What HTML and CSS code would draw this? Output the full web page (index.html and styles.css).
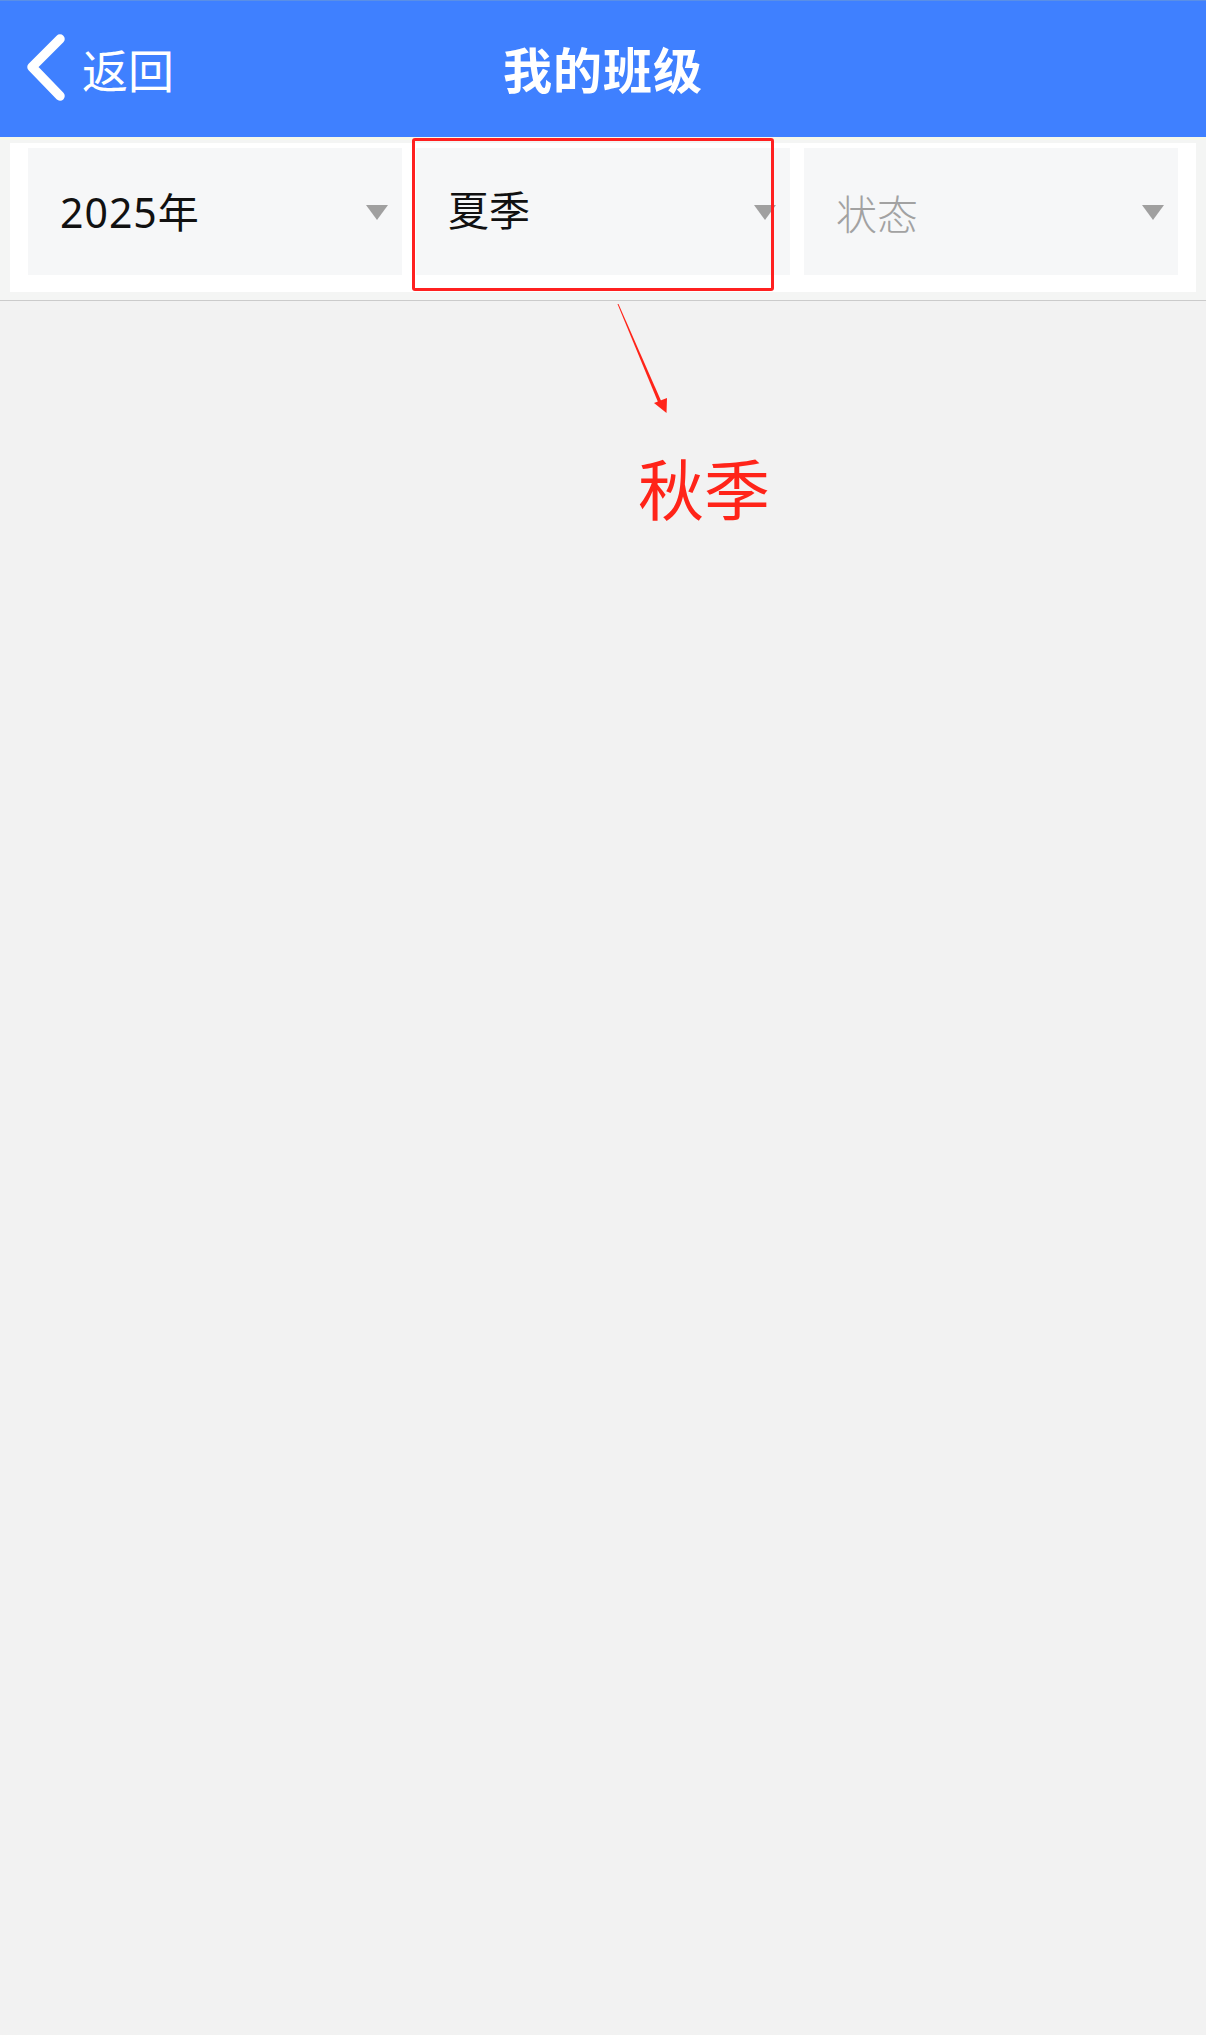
FILE: index.html
```html
<!DOCTYPE html>
<html lang="zh-CN">
<head>
<meta charset="utf-8">
<title>我的班级</title>
<link rel="stylesheet" href="styles.css">
</head>
<body>
<div class="page">
  <header class="navbar">
    <a class="back">
      <svg class="back-icon" width="44" height="70" viewBox="0 0 44 70">
        <polyline points="34,6 6,34 34,63" fill="none" stroke="#fff" stroke-width="9.5" stroke-linecap="round" stroke-linejoin="round"/>
      </svg>
      <span class="back-text">返回</span>
    </a>
    <h1 class="title">我的班级</h1>
  </header>

  <section class="filters">
    <div class="filter-panel">
      <div class="select">
        <span class="select-value year">2025年</span>
        <span class="caret"></span>
      </div>
      <div class="select">
        <span class="select-value">夏季</span>
        <span class="caret"></span>
      </div>
      <div class="select">
        <span class="select-value placeholder">状态</span>
        <span class="caret"></span>
      </div>
    </div>
  </section>

  <main class="content"></main>

  <div class="note-box"></div>
  <svg class="note-arrow" width="80" height="130" viewBox="0 0 80 130">
    <polygon points="8.5,4 9.5,4 53,103 50,104.5" fill="#ff2419"/>
    <polygon points="45,103 58,98 57.5,113" fill="#ff2419"/>
  </svg>
  <div class="note-text">秋季</div>
</div>
</body>
</html>
```

FILE: styles.css
```css
html, body {
  margin: 0;
  padding: 0;
}

body {
  background: #f2f2f2;
  font-family: "Liberation Sans", "Noto Sans CJK SC", sans-serif;
}

.page {
  position: relative;
  width: 1206px;
  min-height: 2035px;
  background: #f2f2f2;
}

/* top navigation bar */
.navbar {
  position: relative;
  height: 136px;
  background: #3f80ff;
  border-top: 1px solid #5a8fe6;
  display: flex;
  align-items: center;
  justify-content: center;
}

.back {
  position: absolute;
  left: 26px;
  top: 0;
  height: 136px;
  display: flex;
  align-items: center;
  gap: 12px;
  color: #fff;
}

.back-icon {
  display: block;
  margin-top: -2px;
}

.back-text {
  font-family: "Noto Sans CJK SC", sans-serif;
  font-size: 46px;
  font-weight: 400;
  line-height: 1;
  margin-top: -2px;
}

.title {
  margin: -4px 0 0;
  color: #fff;
  font-family: "Noto Sans CJK SC", sans-serif;
  font-size: 49px;
  font-weight: 700;
  letter-spacing: 1px;
}

/* filter row */
.filters {
  background: #f4f5f4;
  border-top: 3px solid #f6f8ea;
  padding: 3px 10px 8px;
  border-bottom: 1px solid #cbcbcb;
}

.filter-panel {
  background: #fff;
  padding: 5px 18px 17px;
  display: flex;
  gap: 14px;
}

.select {
  flex: 1;
  height: 127px;
  background: #f6f7f8;
  display: flex;
  align-items: center;
  padding: 0 14px 0 32px;
}

.select-value {
  flex: 1;
  font-size: 41px;
  color: #111;
  line-height: 1;
  margin-top: 2px;
}

.select-value.year {
  font-family: "Noto Sans", "Noto Sans CJK SC", sans-serif;
  letter-spacing: 1px;
}

.select-value.placeholder {
  color: #a2a2a2;
  font-family: "Noto Sans CJK SC", sans-serif;
  font-weight: 300;
}

.caret {
  width: 0;
  height: 0;
  border-left: 11px solid transparent;
  border-right: 11px solid transparent;
  border-top: 15px solid #a0a0a0;
  margin-top: 2px;
}

.content {
  min-height: 1700px;
}

/* red annotation overlay */
.note-box {
  position: absolute;
  left: 412px;
  top: 138px;
  width: 356px;
  height: 147px;
  border: 3px solid #ff2020;
  border-radius: 3px;
}

.note-arrow {
  position: absolute;
  left: 609px;
  top: 300px;
}

.note-text {
  position: absolute;
  left: 638px;
  top: 447px;
  font-family: "Noto Sans CJK SC", sans-serif;
  font-size: 66px;
  line-height: 1.2;
  color: #ff2419;
}
```
